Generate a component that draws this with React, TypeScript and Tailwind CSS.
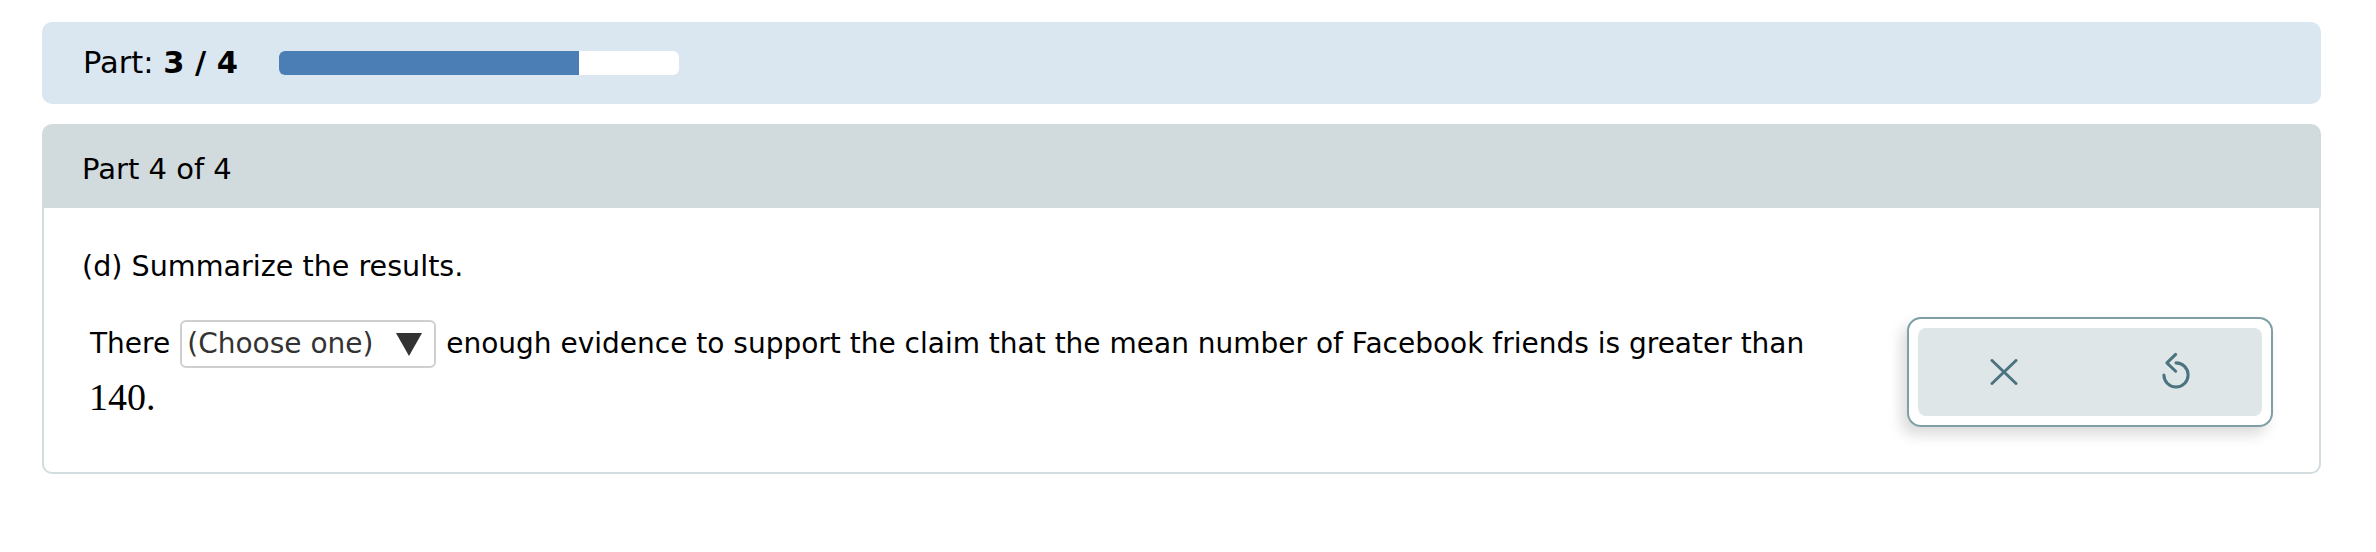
const CloseIcon = () => (
  <svg width="28" height="26" viewBox="0 0 28 26" fill="none" stroke="currentColor" strokeWidth="3" strokeLinecap="round">
    <path d="M2 1.5 26 24.5M26 1.5 2 24.5" />
  </svg>
);

const ReplayIcon = () => (
  <svg
    width="42"
    height="42"
    viewBox="0 0 24 24"
    fill="none"
    stroke="currentColor"
    strokeWidth="1.75"
    strokeLinecap="round"
    strokeLinejoin="round"
  >
    <path d="M12 6.2a6.9 6.9 0 1 1-6.9 6.9" />
    <path d="M11.8 1.4 6.8 6.2l5 4.8" />
  </svg>
);

const Caret = () => (
  <svg width="26" height="23" viewBox="0 0 26 23">
    <polygon points="0,0 26,0 13,23" fill="#333" />
  </svg>
);

export default function App() {
  return (
    <div className="min-h-[552px] bg-white pt-[22px] pl-[42px] pr-[55px] font-['DejaVu_Sans',sans-serif] text-black">
      {/* Progress */}
      <div className="flex h-[82px] items-center gap-[41px] rounded-[10px] bg-[#dae6f0] pl-[41px]">
        <p className="text-[30.5px] leading-none">
          Part: <span className="font-bold">3 / 4</span>
        </p>
        <div className="h-[24px] w-[400px] overflow-hidden rounded-[6px] bg-white">
          <div className="h-full w-[300px] bg-[#4a7eb4]" />
        </div>
      </div>

      {/* Part card */}
      <div className="mt-[20px]">
        <div className="flex h-[84px] items-center rounded-t-[10px] bg-[#d1dadd] pl-[40px] pt-[7px]">
          <h2 className="text-[29px] leading-none">Part 4 of 4</h2>
        </div>

        <div className="flex h-[266px] rounded-b-[10px] border-x-2 border-b-2 border-[#d3dcdf] pl-[38px] pr-[46px] pt-[42px]">
          <div className="flex-1">
            <p className="text-[28.6px] leading-[32px]">(d) Summarize the results.</p>

            <div className="mt-[38px] flex items-center pl-[8px] text-[28px]">
              <span>There</span>
              <div className="mx-[10px] flex h-[48px] w-[256px] items-center rounded-[6px] border-2 border-[#cfcfcf] bg-white pl-[5px] pr-[12px] text-[#333]">
                <span className="flex-1 whitespace-nowrap">(Choose one)</span>
                <Caret />
              </div>
              <span>
                enough evidence to support the claim that the mean number of Facebook friends is greater than
              </span>
            </div>

            <div className="mt-[7px] pl-[7px] font-['Liberation_Serif',serif] text-[38px] leading-[44px]">
              140.
            </div>
          </div>

          {/* Actions */}
          <div className="mt-[67px] self-start">
            <div className="w-[366px] rounded-[14px] border-2 border-[#7f9ea6] bg-white p-[9px] shadow-[-6px_8px_14px_rgba(0,0,0,0.14)]">
              <div className="flex h-[88px] rounded-[8px] bg-[#dfe6e8] text-[#4b7380]">
                <button className="flex flex-1 items-center justify-center">
                  <CloseIcon />
                </button>
                <button className="flex flex-1 items-center justify-center pt-[2px]">
                  <ReplayIcon />
                </button>
              </div>
            </div>
          </div>
        </div>
      </div>
    </div>
  );
}
